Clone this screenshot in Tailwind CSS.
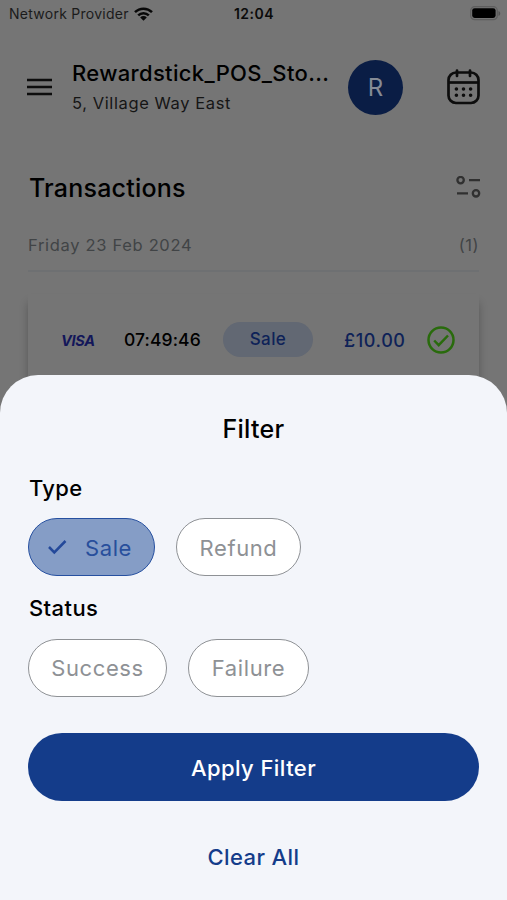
<!DOCTYPE html>
<html lang="en">
<head>
<meta charset="utf-8">
<title>Transactions</title>
<script src="https://cdn.jsdelivr.net/npm/@tailwindcss/browser@4"></script>
</head>
<body class="font-['Inter',sans-serif] bg-[#757575] text-black">
<div class="w-[507px] h-[900px] flex flex-col overflow-hidden whitespace-nowrap">
  <main class="h-[375px] shrink-0 flex flex-col">
    <div class="h-[27px] mb-px shrink-0 grid grid-cols-3 items-center pl-[9px] pr-[6px] text-[14px]">
      <div class="flex items-center gap-[5px]">
        <span class="text-[#1b1b1b] tracking-[0.26px]">Network Provider</span>
        <svg class="w-[19px] h-[14px] shrink-0" viewBox="0 0 19 14" fill="none" stroke="#080808" stroke-width="2.5"><path d="M1 5.2C5.8.5 13.200.5 18 5.200M4.200 8.300c3-2.900 7.600-2.900 10.600 0"/><path d="M6.200 10.400c1.900-1.800 4.700-1.800 6.600 0L9.500 13.700Z" fill="#080808" stroke="none"/></svg>
      </div>
      <span class="text-center font-semibold text-[14px] tracking-[0.5px] text-[#0b0b0b] pr-[2px]">12:04</span>
      <svg class="justify-self-end w-[31px] h-[15px]" viewBox="0 0 31 15"><rect x=".7" y=".7" width="26.600" height="13" rx="4" fill="#757575" stroke="#5e5e5e" stroke-width="1.200"/><rect x="2.200" y="2.200" width="23.400" height="9.800" rx="2.400" fill="#000"/><path d="M28.500 5v5c2.300-.8 2.300-4.200 0-5Z" fill="#555"/></svg>
    </div>
    <header class="h-[118px] shrink-0 flex items-center pl-[27px] pr-[27px]">
      <svg class="w-[25px] h-[18px] shrink-0" viewBox="0 0 25 18" stroke="#0d0d0d" stroke-width="2.500"><path d="M0 2h25M0 9h25M0 16h25"/></svg>
      <div class="ml-5 w-[264px] shrink-0 flex flex-col pt-px">
        <span class="h-[30px] leading-[30px] text-[22px] font-medium tracking-[0.33px]">Rewardstick_POS_Sto...</span>
        <span class="h-[30px] leading-[31px] text-[16.500px] tracking-[0.6px] text-[#151515]">5, Village Way East</span>
      </div>
      <div class="ml-3 size-[55px] shrink-0 rounded-full bg-[#0a1d45] text-[#858b96] text-[24px] flex items-center justify-center pt-[2px]">R</div>
      <svg class="ml-auto w-[33px] h-[36px] shrink-0" viewBox="0 0 33 36" fill="none" stroke="#0d0d0d" stroke-width="2.700"><rect x="1.500" y="3.500" width="30" height="30.500" rx="7.500"/><path d="M1.500 13.500h30"/><path d="M10 1.500v5.500M23 1.500v5.500" stroke-linecap="round"/><path d="M9.400 20h.01M16.500 20h.01M23.600 20h.01M9.400 26.300h.01M16.500 26.300h.01M23.600 26.300h.01" stroke-width="3.600" stroke-linecap="round"/></svg>
    </header>
    <div class="h-[84px] shrink-0 flex items-center justify-between pl-[29px] pr-[26px]">
      <h1 class="text-[25px] font-medium tracking-[0.2px] pt-[2px]">Transactions</h1>
      <svg class="w-[25px] h-[22px] mb-[2px]" viewBox="0 0 25 22" fill="none" stroke="#303030" stroke-width="2.300"><circle cx="4.600" cy="4.100" r="3.200"/><circle cx="20" cy="17.300" r="3.200"/><path d="M13 4.100h11M1 17.300h11"/></svg>
    </div>
    <div class="h-[42px] shrink-0 mx-7 border-b-2 border-[#6e7072] flex items-center justify-between pb-[9px] text-[16.500px] tracking-[0.680px] text-[#414446]">
      <span>Friday 23 Feb 2024</span><span class="tracking-[0.5px]">(1)</span>
    </div>
    <section class="mt-[22px] mx-7 h-[140px] shrink-0 bg-[#757575] shadow-[0_8px_9px_-1px_rgba(0,0,0,0.3)] flex items-start pt-[27px]">
      <div class="h-[37px] flex-1 flex items-center">
        <span class="ml-[33px] w-[33px] italic font-bold text-[14.500px] tracking-[-0.300px] pt-[2px] text-[#13175a]">VISA</span>
        <span class="ml-[30px] w-[78px] text-[17.500px] font-medium tracking-[0.1px] pt-[2px]">07:49:46</span>
        <span class="ml-[21px] w-[90px] h-[35px] shrink-0 rounded-full bg-[#626873] text-[#0e2258] text-[17px] font-medium tracking-[0.4px] flex items-center justify-center">Sale</span>
        <span class="ml-[31px] w-[62px] text-[18px] font-medium tracking-[0.6px] pt-[2px] text-[#0e2258]">£10.00</span>
        <svg class="ml-[21px] size-[28px] shrink-0" viewBox="0 0 28 28" fill="none" stroke="#296b0c" stroke-width="2.500"><circle cx="14" cy="14" r="12.500"/><path d="m7.200 14.500 4.500 4.600L21 9.500"/></svg>
      </div>
    </section>
  </main>
  <section class="relative h-[525px] shrink-0 rounded-t-[38px] bg-[#f3f5fa] px-7 flex flex-col" role="dialog">
    <h2 class="h-[107px] leading-[109px] text-center text-[25px] font-medium tracking-[0.3px]">Filter</h2>
    <h3 class="-mt-[10px] ml-px h-[32px] leading-[32px] text-[22px] font-medium tracking-[0.3px]">Type</h3>
    <div class="mt-[14px] h-[58px] flex gap-[21px] text-[22px] tracking-[0.6px]">
      <button class="w-[127px] rounded-full border-[1.500px] border-[#2650a0] bg-[#859dc6] text-[#284f9c] flex items-center pl-[18px]"><svg class="w-[21px] h-[16px] mr-[17px]" viewBox="0 0 21 16" fill="none" stroke="#24499a" stroke-width="2.500"><path d="m2 8 5.300 5.400L18.500 2"/></svg><span class="pt-[2px]">Sale</span></button>
      <button class="w-[125px] rounded-full border-[1.500px] border-[#8e9195] bg-white text-[#8e9195] pt-[2px]">Refund</button>
    </div>
    <h3 class="mt-[15px] ml-px h-[34px] leading-[34px] text-[22px] font-medium tracking-[0.4px]">Status</h3>
    <div class="mt-[14px] h-[58px] flex gap-[21px] text-[22px] tracking-[0.6px] text-[#8e9195]">
      <button class="w-[139px] rounded-full border-[1.500px] border-[#8e9195] bg-white">Success</button>
      <button class="w-[121px] rounded-full border-[1.500px] border-[#8e9195] bg-white">Failure</button>
    </div>
    <button class="mt-[36px] h-[68px] rounded-full bg-[#143c8a] text-white text-[22px] font-medium tracking-[0.430px] pt-[2px]">Apply Filter</button>
    <button class="mt-[39px] h-[34px] text-[#143c8a] text-[22px] font-medium tracking-[0.400px]">Clear All</button>
  </section>
</div>
</body>
</html>
